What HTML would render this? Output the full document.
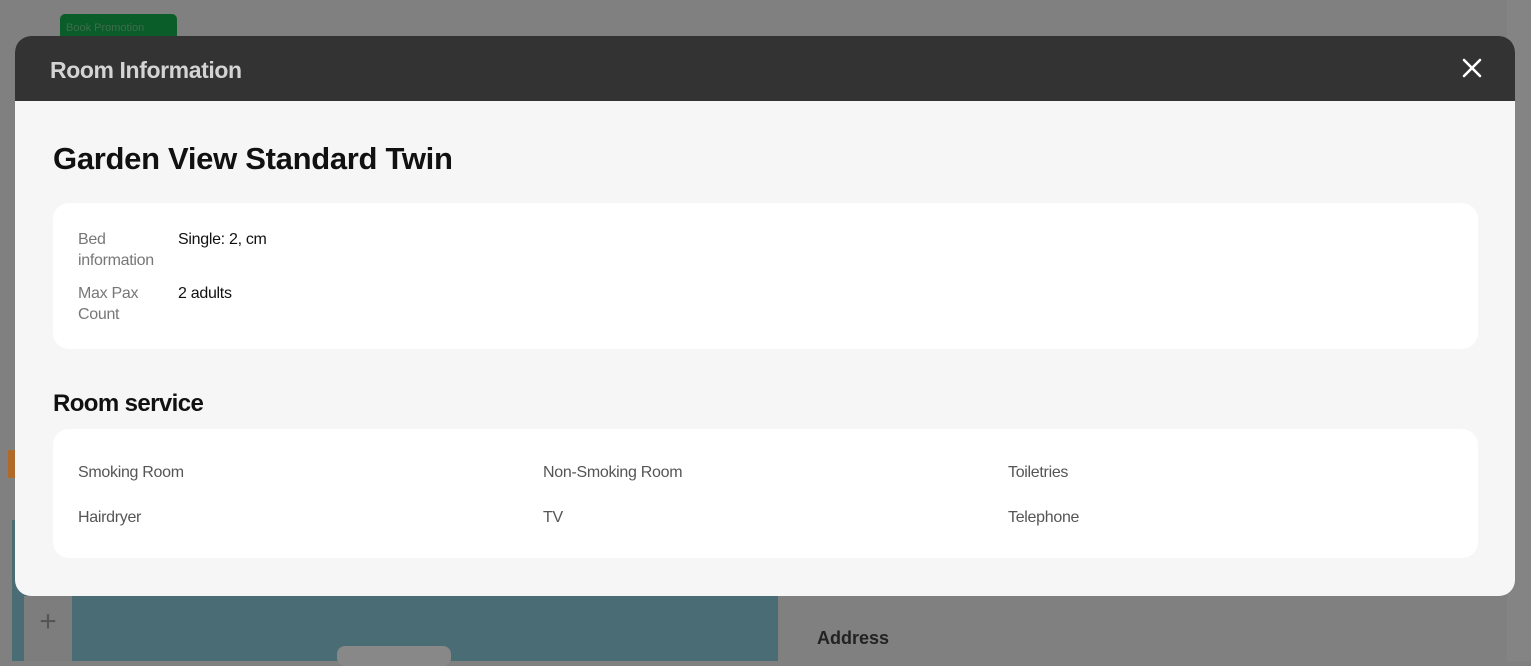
<!DOCTYPE html>
<html><head><meta charset="utf-8"><style>
*{margin:0;padding:0;box-sizing:border-box}
html,body{width:1531px;height:661px;overflow:hidden;background:#808080;font-family:"Liberation Sans",sans-serif}
.bg{position:absolute}
.modal{position:absolute;left:15px;top:36px;width:1500px;height:560px;background:#f6f6f6;border-radius:16px;overflow:hidden}
.hd{height:65px;background:#333;position:relative}
.hd h2{position:absolute;left:35px;top:21px;font-size:23px;font-weight:bold;color:#d4d4d4;letter-spacing:-0.4px}
.x{position:absolute;left:1447px;top:22px}
h1{position:absolute;left:38px;top:105px;font-size:31px;font-weight:bold;color:#111;letter-spacing:-0.3px}
.card{position:absolute;left:38px;width:1425px;background:#fff;border-radius:16px}
.l{position:absolute;font-size:16px;color:#777;line-height:21px;letter-spacing:-0.3px}
.v{position:absolute;font-size:16px;color:#111;letter-spacing:-0.3px}
h3{position:absolute;left:38px;top:354px;font-size:24px;font-weight:bold;color:#111;letter-spacing:-0.6px}
.s{position:absolute;font-size:16px;color:#555;letter-spacing:-0.3px}
</style></head><body>
<div class="bg" style="left:60px;top:14px;width:117px;height:26px;background:#0a5c28;border-radius:5px;color:#3d6e4a;font-size:11px;padding:8px 6px">Book Promotion</div>
<div class="bg" style="left:8px;top:450px;width:8px;height:28px;background:#b06a2a"></div>
<div class="bg" style="left:12px;top:520px;width:766px;height:141px;background:#4a6d75"></div>
<div class="bg" style="left:24px;top:596px;width:48px;height:65px;background:#7d7d7d;color:#555;font-size:30px;text-align:center;line-height:52px">+</div>
<div class="bg" style="left:337px;top:646px;width:114px;height:20px;background:#888;border-radius:8px"></div>
<div class="bg" style="left:817px;top:628px;font-size:18px;font-weight:bold;color:#222">Address</div>
<div class="bg" style="left:1507px;top:0;width:24px;height:661px;background:#848484"></div>
<div class="modal">
<div class="hd"><h2>Room Information</h2>
<svg class="x" width="20" height="20" viewBox="0 0 20 20"><path d="M2 2L18 18M18 2L2 18" stroke="#fff" stroke-width="2.6" stroke-linecap="round"/></svg></div>
<h1>Garden View Standard Twin</h1>
<div class="card" style="top:167px;height:146px">
<div class="l" style="left:25px;top:26px">Bed<br>information</div>
<div class="v" style="left:125px;top:28px">Single: 2, cm</div>
<div class="l" style="left:25px;top:80px">Max Pax<br>Count</div>
<div class="v" style="left:125px;top:82px">2 adults</div>
</div>
<h3>Room service</h3>
<div class="card" style="top:393px;height:129px">
<div class="s" style="left:25px;top:35px">Smoking Room</div>
<div class="s" style="left:490px;top:35px">Non-Smoking Room</div>
<div class="s" style="left:955px;top:35px">Toiletries</div>
<div class="s" style="left:25px;top:80px">Hairdryer</div>
<div class="s" style="left:490px;top:80px">TV</div>
<div class="s" style="left:955px;top:80px">Telephone</div>
</div>
</div>
</body></html>
